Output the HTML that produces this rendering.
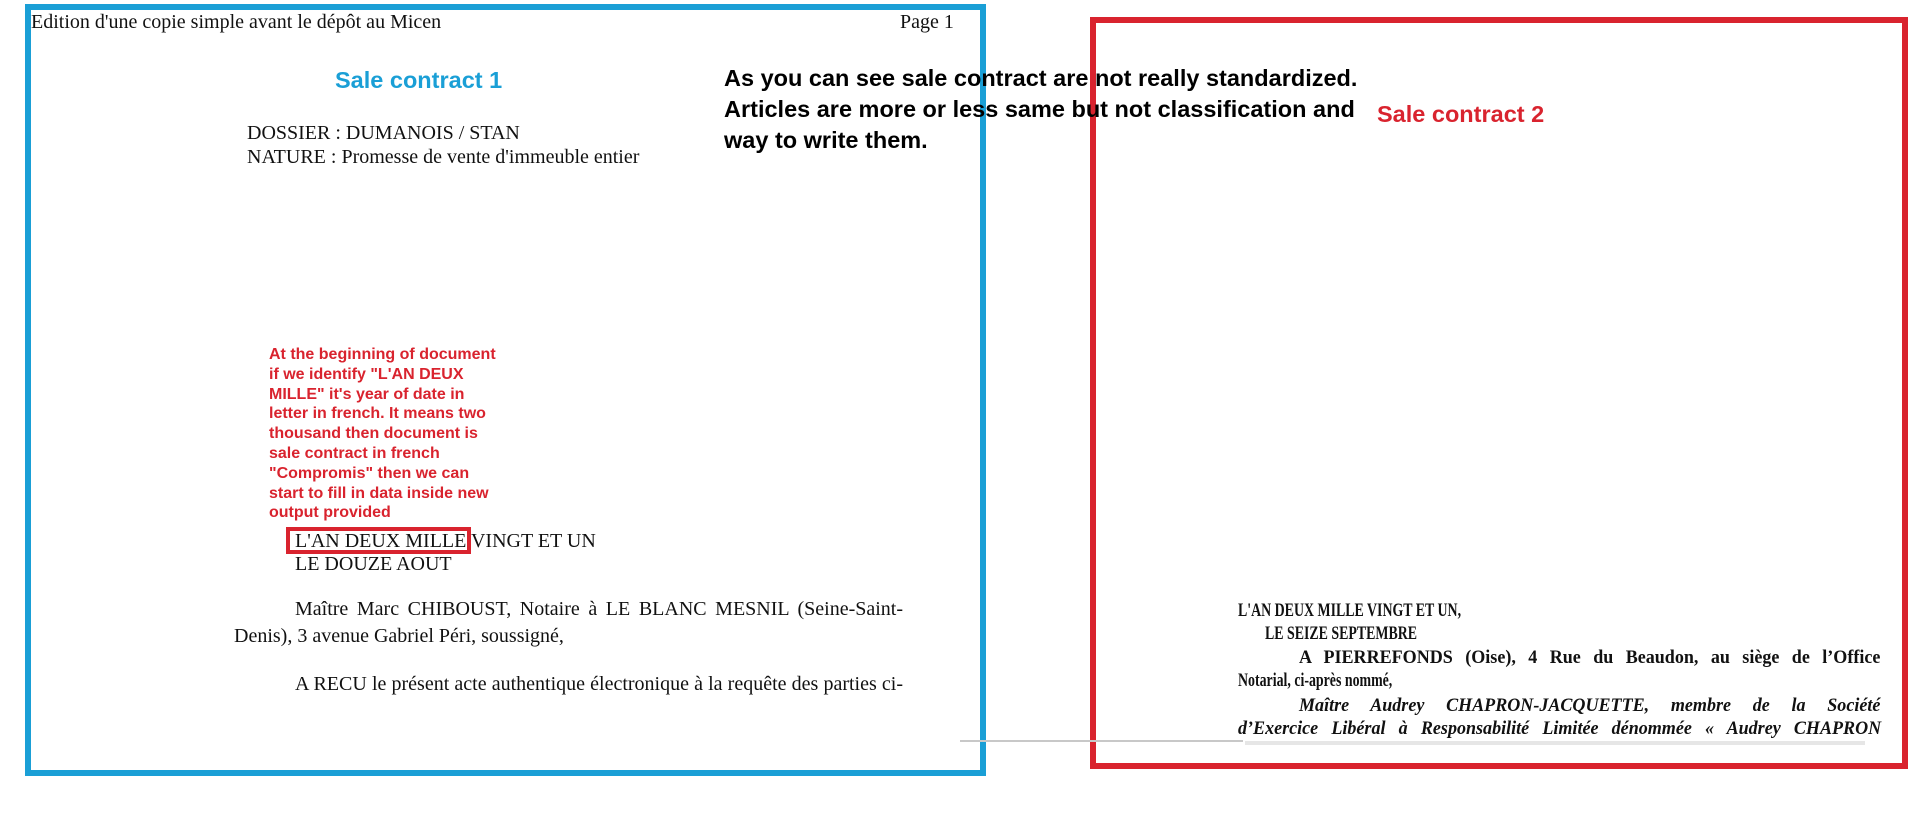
<!DOCTYPE html>
<html><head><meta charset="utf-8"><style>
body{margin:0;width:1914px;height:822px;background:#fff;position:relative;overflow:hidden;font-family:"Liberation Serif",serif;color:#111}
.a{position:absolute;white-space:nowrap;line-height:1}
.box{position:absolute;box-sizing:border-box}
.s{font-family:"Liberation Sans",sans-serif;font-weight:bold}
.r{position:absolute;font-family:"Liberation Serif",serif;font-size:19px;line-height:1;font-weight:bold;left:1238px;white-space:nowrap;transform:scaleX(0.731);transform-origin:left}
.w{transform:scaleX(0.95)}
.j{text-align:justify;text-align-last:justify;white-space:normal}
</style></head><body>
<div class="box" style="left:25px;top:4px;width:961px;height:772px;border:6px solid #1a9fd6"></div>
<div class="box" style="left:1090px;top:17px;width:818px;height:752px;border:6px solid #d9232e"></div>
<div style="position:absolute;left:960px;top:740px;width:283px;height:2px;background:#c8c8c8"></div>
<div style="position:absolute;left:1245px;top:741px;width:620px;height:4px;background:#e6e6e6"></div>

<div class="a" style="left:31px;top:12px;font-size:20px">Edition d'une copie simple avant le dépôt au Micen</div>
<div class="a" style="left:900px;top:12px;font-size:20px">Page 1</div>
<div class="a s" style="left:335px;top:69px;font-size:23.5px;color:#1a9fd6">Sale contract 1</div>
<div class="a s" style="left:724px;top:63px;font-size:23.5px;line-height:31px;color:#000">As you can see sale contract are not really standardized.<br>Articles are more or less same but not classification and<br>way to write them.</div>
<div class="a s" style="left:1377px;top:103px;font-size:23.5px;color:#d9232e">Sale contract 2</div>

<div class="a" style="left:247px;top:121px;font-size:20px;line-height:24px">DOSSIER : DUMANOIS / STAN<br>NATURE : Promesse de vente d'immeuble entier</div>

<div class="a s" style="left:269px;top:345px;font-size:16px;line-height:19.8px;color:#d9232e">At the beginning of document<br>if we identify "L'AN DEUX<br>MILLE" it's year of date in<br>letter in french. It means two<br>thousand then document is<br>sale contract in french<br>"Compromis" then we can<br>start to fill in data inside new<br>output provided</div>

<div class="box" style="left:286px;top:527px;width:185px;height:27px;border:4px solid #d9232e"></div>
<div class="a" style="left:295px;top:530px;font-size:20px;line-height:23px">L'AN DEUX MILLE VINGT ET UN<br>LE DOUZE AOUT</div>
<div class="a j" style="left:295px;top:599px;width:608px;font-size:20px">Maître Marc CHIBOUST, Notaire à LE BLANC MESNIL (Seine-Saint-</div>
<div class="a" style="left:234px;top:626px;font-size:20px">Denis), 3 avenue Gabriel Péri, soussigné,</div>
<div class="a j" style="left:295px;top:674px;width:608px;font-size:20px">A RECU le présent acte authentique électronique à la requête des parties ci-</div>

<div class="r" style="top:601px">L'AN DEUX MILLE VINGT ET UN,</div>
<div class="r" style="top:624px;left:1265px">LE SEIZE SEPTEMBRE</div>
<div class="r w j" style="top:648px;left:1299px;width:612px">A PIERREFONDS (Oise), 4 Rue du Beaudon, au siège de l’Office</div>
<div class="r" style="top:671px">Notarial, ci-après nommé,</div>
<div class="r w j" style="top:696px;left:1299px;width:612px;font-style:italic">Maître Audrey CHAPRON-JACQUETTE, membre de la Société</div>
<div class="r w j" style="top:719px;width:677px;font-style:italic">d’Exercice Libéral à Responsabilité Limitée dénommée « Audrey CHAPRON</div>
</body></html>
